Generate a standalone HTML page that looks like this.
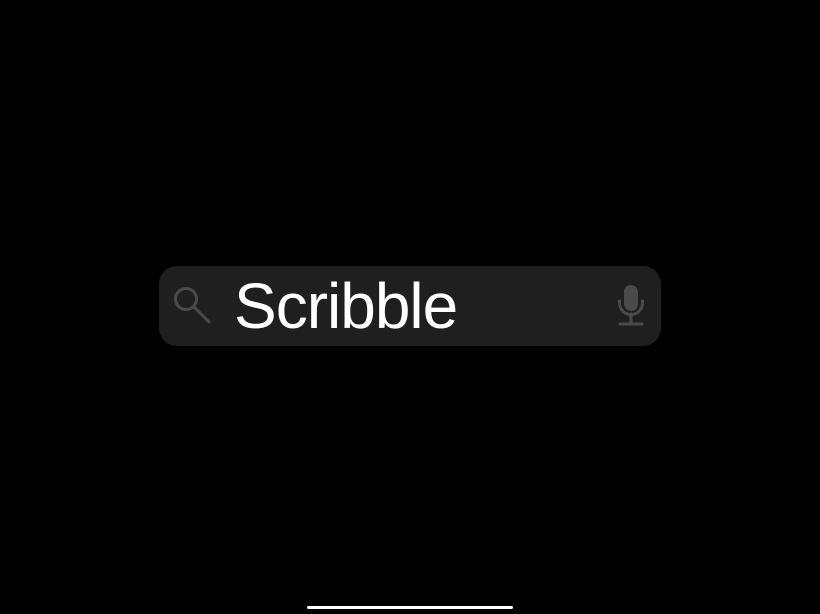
<!DOCTYPE html>
<html><head><style>
html,body{margin:0;padding:0;background:#000;width:820px;height:614px;overflow:hidden}
.bar{position:absolute;left:159px;top:266px;width:502px;height:80px;border-radius:18px;background:#1f1f1f}
.t{position:absolute;left:234px;top:266px;font-family:"Liberation Sans",sans-serif;font-size:64px;letter-spacing:-1px;color:#fff;line-height:80px}
.home{position:absolute;left:307px;top:606px;width:206px;height:3px;border-radius:2px;background:#fff}
</style></head><body>
<div class="bar"></div>
<div class="t">Scribble</div>
<svg width="820" height="614" style="position:absolute;left:0;top:0">
<g stroke="#4a4a4a" stroke-width="3" fill="none" stroke-linecap="round">
<circle cx="186" cy="299" r="10.5"/>
<line x1="194" y1="307" x2="209" y2="322"/>
<path d="M619.5 301 v2 a11.5 11.5 0 0 0 23 0 v-2"/>
<line x1="631" y1="314" x2="631" y2="323"/>
<line x1="620" y1="324" x2="642" y2="324"/>
</g>
<rect x="624" y="285" width="14" height="26" rx="7" fill="#4a4a4a"/>
</svg>
<div class="home"></div>
</body></html>
